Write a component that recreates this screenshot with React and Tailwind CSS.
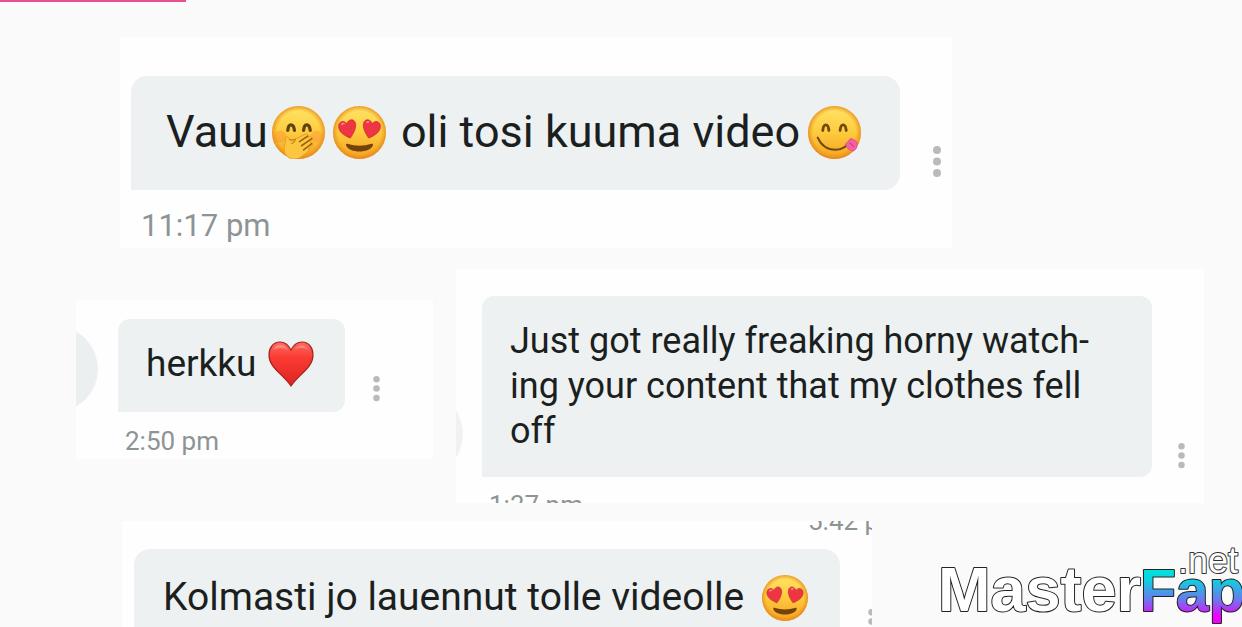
import React from "react";

const Face = ({ id, className, children }) => (
  <svg viewBox="0 0 52 52" className={className} aria-hidden="true">
    <defs>
      <linearGradient id={id} x1="0" y1="0" x2="0" y2="1">
        <stop offset="0" stopColor="#ffe566" />
        <stop offset="0.5" stopColor="#fdcb3e" />
        <stop offset="1" stopColor="#f5a123" />
      </linearGradient>
      <radialGradient id={`${id}-edge`}>
        <stop offset="0.8" stopColor="#e88a1a" stopOpacity="0" />
        <stop offset="1" stopColor="#e07c14" stopOpacity="0.7" />
      </radialGradient>
    </defs>
    <circle cx="26" cy="26" r="26" fill={`url(#${id})`} />
    <circle cx="26" cy="26" r="26" fill={`url(#${id}-edge)`} />
    {children}
  </svg>
);

const HeartEyes = ({ id, className }) => (
  <Face id={id} className={className}>
    <g fill="#ee3543" stroke="#c9242f" strokeWidth="0.7">
      <path d="M17 31.500C11 29 5.500 25.500 5.500 20C5.500 15 11 13.500 13.500 17.500C15 12.500 21 12 22 17C23 22 20 27 17 31.500Z" />
      <path d="M35 31.500C32 27 29 22 30 17C31 12 37 12.500 38.500 17.500C41 13.500 46.500 15 46.500 20C46.500 25.500 41 29 35 31.500Z" />
    </g>
    <path d="M8.500 18.500Q9.500 16.500 11.500 17.500M33 16.500Q34 15 35.500 16" stroke="#ff8b8b" strokeWidth="1.500" fill="none" />
    <path d="M14 37Q26 41 38 37Q40 36.500 39 39C36 46.500 16 46.500 13 39Q12 36.500 14 37Z" fill="#75420b" />
  </Face>
);

const HandOverMouth = ({ id, className }) => (
  <Face id={id} className={className}>
    <ellipse cx="8" cy="30" rx="6" ry="6" fill="#fa7d32" opacity="0.3" />
    <ellipse cx="44" cy="30" rx="6" ry="6" fill="#fa7d32" opacity="0.25" />
    <g fill="none" stroke="#5c4310" strokeWidth="3.200" strokeLinecap="round">
      <path d="M15.500 24Q16 18.500 18.500 18.500Q21.500 18.500 22 24" />
      <path d="M31 24Q31.500 18.500 34 18.500Q37 18.500 37.500 24" />
    </g>
    <path
      d="M13 47C10 42 13.500 37 13.500 31.500C14 29 17 31 18 34.500L22 33L33 27.500C36 27 36 29.500 34 31L38 30C41 31 39 33.500 37 35L39 36C41 38 38 40.500 36 41.500C37 43 35 46 31 48C27 52 21 53 18 51.500Q15 50 13 47Z"
      fill="#fdc640"
      stroke="#df9420"
      strokeWidth="0.8"
    />
    <g fill="none" stroke="#9c5f10" strokeWidth="1.500" strokeLinecap="round">
      <path d="M27 35L35 29.500M29 39L39 32M31 43L39 37" />
    </g>
    <path d="M16.500 32.500Q20 34 23 32.500Q22 36 19 37" fill="none" stroke="#c37b15" strokeWidth="1" />
  </Face>
);

const Yum = ({ id, className }) => (
  <Face id={id} className={className}>
    <g fill="none" stroke="#75480c" strokeLinecap="round">
      <path d="M14.500 24Q15 18.500 17.500 18.500Q20 18.500 20.500 24" strokeWidth="2.800" />
      <path d="M31.500 24Q32 18.500 34.500 18.500Q37 18.500 37.500 24" strokeWidth="2.800" />
      <path d="M9.500 31Q15 43 27 43Q37 43 42 33" strokeWidth="2" />
    </g>
    <path d="M37 37L42 32Q50 34 48 40Q46 46 41 43Q37 41 37 37Z" fill="#f560a4" stroke="#d94386" strokeWidth="0.7" />
    <path d="M41 36L45 40" stroke="#c93679" strokeWidth="1" />
  </Face>
);

const Heart = ({ className }) => (
  <svg viewBox="0 0 46 46" className={className} aria-hidden="true">
    <defs>
      <linearGradient id="heart-fill" x1="0" y1="0" x2="0" y2="1">
        <stop offset="0" stopColor="#ff6a60" />
        <stop offset="0.35" stopColor="#fa3c34" />
        <stop offset="1" stopColor="#dc2420" />
      </linearGradient>
    </defs>
    <path
      d="M23 9C20 3 16 1 12 1C5 1 1 7 1 14C1 27 15 33 23 45C31 33 45 27 45 14C45 7 41 1 34 1C30 1 26 3 23 9Z"
      fill="url(#heart-fill)"
      stroke="#a52320"
      strokeWidth="1.200"
    />
    <path d="M5 9Q8 3 14 4Q18 5 20 9Q12 5 5 9ZM27 8Q34 0 41 9Q34 5 27 8Z" fill="#ffb0a8" opacity="0.5" />
  </svg>
);

const MoreButton = ({ big, className }) => (
  <button type="button" aria-label="More" className={`shrink-0 ${className}`}>
    <svg viewBox="0 0 8 32" className={big ? "h-8 w-2" : "h-[26px] w-[7px]"} fill="#b9bbbb">
      <circle cx="4" cy="4" r="4" />
      <circle cx="4" cy="15.500" r="4" />
      <circle cx="4" cy="27" r="4" />
    </svg>
  </button>
);

const Wordmark = () => (
  <svg
    viewBox="0 0 304 80"
    className="absolute right-0 bottom-0 h-20 w-[304px]"
    fontFamily="'Liberation Sans', Arial, sans-serif"
    fontWeight="700"
    paintOrder="stroke"
    strokeLinejoin="round"
  >
    <defs>
      <linearGradient id="wordmark" gradientUnits="userSpaceOnUse" x1="0" y1="22" x2="0" y2="78">
        <stop offset="0" stopColor="#00e4dc" />
        <stop offset="0.2" stopColor="#10d0e0" />
        <stop offset="0.55" stopColor="#6a78ee" />
        <stop offset="0.85" stopColor="#f000ff" />
      </linearGradient>
    </defs>
    <text x="0" y="64" fontSize="63" fill="#fff" stroke="#222" strokeWidth="2">
      Master
    </text>
    <text x="202" y="64" fontSize="59" fill="url(#wordmark)" stroke="#222" strokeWidth="2">
      Fap
    </text>
    <text x="240" y="26" fontSize="36" fontWeight="400" fill="#fff" stroke="#333" strokeWidth="2">
      .net
    </text>
  </svg>
);

export default function App() {
  return (
    <div className="relative flex h-screen flex-col overflow-hidden bg-[#fafafb] font-[Roboto,sans-serif] text-[#1b1f20]">
      <div className="h-0.5 w-[15%] shrink-0 bg-[#e6508f]" />

      <section className="mt-[35px] ml-[120px] h-[211px] w-[67%] shrink-0 bg-[#fefefe] pt-[39px] pl-[11px]">
        <div className="flex items-end">
          <div className="flex h-[114px] w-[769px] shrink-0 items-center rounded-2xl rounded-bl-none bg-[#edf1f2] pb-0.5 pl-[35px] text-[45px] whitespace-pre">
            <span>Vauu</span>
            <HandOverMouth id="hand" className="mx-1 size-[53px]" />
            <HeartEyes id="eyes-a" className="mx-1 size-[53px]" />
            <span> oli tosi kuuma video</span>
            <Yum id="yum" className="ml-2 size-[53px]" />
          </div>
          <MoreButton big className="mb-3 ml-[33px]" />
        </div>
        <p className="mt-4 ml-2.5 text-[31px] leading-10 text-[#8d9496]">11:17 pm</p>
      </section>

      <div className="mt-[21px] mr-[38px] ml-[76px] flex shrink-0 items-start gap-[23px]">
        <section className="mt-[31px] h-[159px] w-[357px] shrink-0 overflow-hidden bg-[#fefefe] pt-[18px]">
          <div className="flex items-center">
            <div className="mt-2 -ml-[64px] size-[86px] shrink-0 rounded-full bg-[#eceff0]" />
            <div className="ml-5 flex h-[93px] w-[227px] items-center gap-3 rounded-xl rounded-bl-none bg-[#edf1f2] pb-0.5 pl-7 text-[37px]">
              <span>herkku</span>
              <Heart className="size-[46px]" />
            </div>
            <MoreButton className="mt-12 ml-7" />
          </div>
          <p className="mt-[11px] ml-[49px] text-[26px] leading-9 text-[#8d9496]">2:50 pm</p>
        </section>

        <section className="h-[234px] min-w-0 flex-1 overflow-hidden bg-[#fefefe] pt-[27px]">
          <div className="flex items-end">
            <div className="-ml-[79px] size-[86px] shrink-0 rounded-full bg-[#f0f1f1]" />
            <div className="ml-[19px] h-[181px] flex-1 rounded-xl rounded-bl-none bg-[#edf1f2] pt-[23px] pl-7 text-[36px] leading-[45px] whitespace-nowrap">
              Just got really freaking horny watch-
              <br />
              ing your content that my clothes fell
              <br />
              off
            </div>
            <MoreButton className="mr-[19px] mb-2 ml-[26px]" />
          </div>
          <p className="mt-2.5 ml-[33px] text-[26px] leading-9 text-[#8d9496]">1:37 pm</p>
        </section>
      </div>

      <section className="mt-[18px] ml-[122px] min-h-0 w-[750px] flex-1 overflow-hidden bg-[#fefefe]">
        <p className="-mt-4 ml-[686px] text-[26px] leading-8 whitespace-nowrap text-[#8d9496]">5:42 pm</p>
        <div className="mt-3 ml-3 flex items-start">
          <div className="flex h-[97px] w-[706px] shrink-0 items-center gap-[18px] rounded-2xl bg-[#edf1f2] pl-[29px] text-[39px]">
            <span>Kolmasti jo lauennut tolle videolle</span>
            <HeartEyes id="eyes-b" className="size-[46px]" />
          </div>
          <MoreButton className="mt-[60px] ml-7" />
        </div>
      </section>

      <Wordmark />
    </div>
  );
}
